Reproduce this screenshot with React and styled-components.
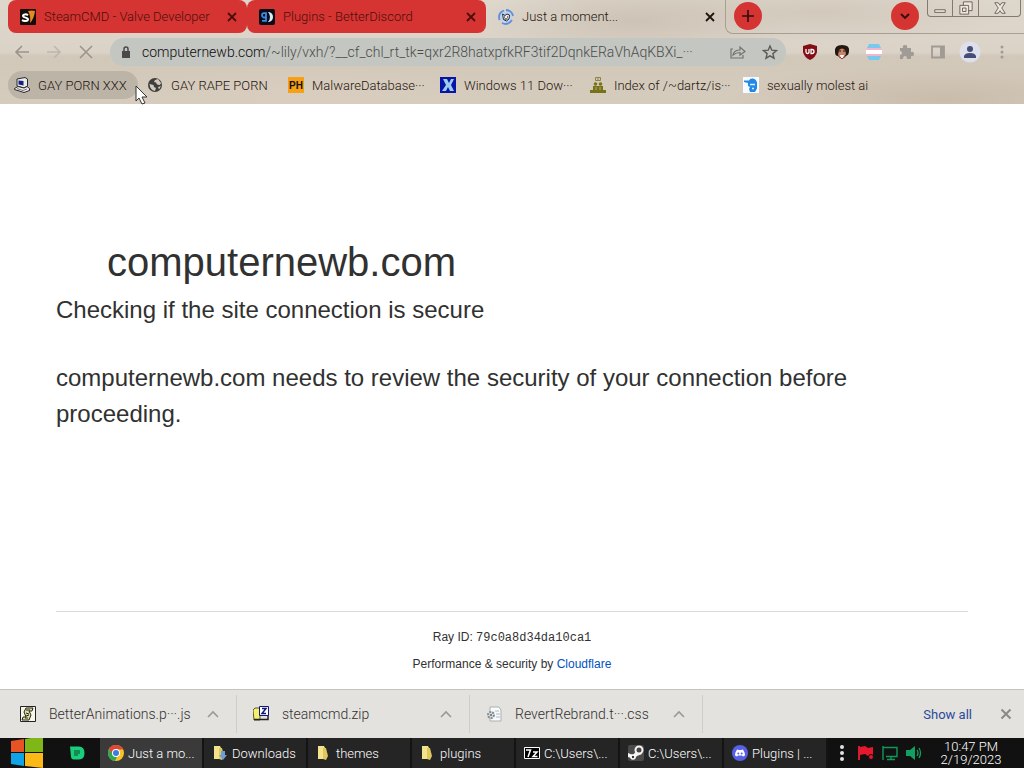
import React from 'react';
import styled, { createGlobalStyle } from 'styled-components';

const GlobalStyle = createGlobalStyle`
  * {
    box-sizing: border-box;
  }
  body {
    margin: 0;
    font-family: Roboto, "Liberation Sans", sans-serif;
    font-weight: 300;
    font-size: 13px;
    color: #1f150e;
  }
  button {
    font: inherit;
    color: inherit;
    padding: 0;
    border: 0;
    background: none;
  }
  a {
    color: inherit;
    text-decoration: none;
  }
  svg {
    display: block;
    flex: none;
  }
`;

const Screen = styled.div`
  display: flex;
  flex-direction: column;
  min-height: 100vh;
  overflow: hidden;
  background: #ffffff;
`;

const Chrome = styled.header`
  position: relative;
  background:
    radial-gradient(ellipse 160px 40px at 62% 20%, #cdc3b5 0%, transparent 100%),
    radial-gradient(ellipse 200px 30px at 80% 12%, #d2c9bc 0%, transparent 100%),
    radial-gradient(ellipse 220px 34px at 92% 95%, #c9bcab 0%, transparent 100%),
    radial-gradient(ellipse 200px 30px at 30% 90%, #d8cdbf 0%, transparent 100%),
    linear-gradient(to bottom, #ded7cc 0%, #dbd3c8 50%, #d2c8ba 54%, #d6ccbe 100%);
`;

const TabStrip = styled.nav`
  display: flex;
  height: 34px;
  padding-left: 8px;
`;

const TabBox = styled.div`
  display: flex;
  align-items: center;
  flex: 0 1 239px;
  min-width: 0;
  height: 33px;
  padding: 0 7px 0 12px;
  border-radius: 8px;
  color: ${props => (props.$active ? '#1f150e' : '#4a0f0b')};
  background: ${props => (props.$active ? 'transparent' : '#d63432')};
`;

const TabTitle = styled.a`
  flex: 1;
  min-width: 0;
  margin-left: 8px;
  white-space: nowrap;
  overflow: hidden;
`;

const IconButton = styled.button`
  display: flex;
  align-items: center;
  justify-content: center;
  flex: none;
  width: ${props => props.$size || 32}px;
  height: ${props => props.$size || 32}px;
`;

const StripRest = styled.div`
  display: flex;
  justify-content: space-between;
  flex: 1;
  padding: 2px 3px 0 8px;
  border: 1px solid #a89f93;
  border-width: 0 0 1px 1px;
  border-bottom-left-radius: 8px;
`;

const RoundButton = styled.button`
  display: flex;
  align-items: center;
  justify-content: center;
  width: 28px;
  height: 28px;
  border-radius: 50%;
  color: #2a1010;
  background: #d63432;
`;

const StripEnd = styled.div`
  display: flex;
  gap: 8px;
`;

const WindowButtons = styled.div`
  display: flex;
  height: 17px;
  margin-top: -2px;
  border: 1px solid #85796d;
  border-top: 0;
  border-radius: 0 0 4px 4px;
`;

const WindowButton = styled.button`
  display: flex;
  align-items: center;
  justify-content: center;
  width: ${props => props.$width}px;
  & + & {
    border-left: 1px solid #85796d;
  }
`;

const Toolbar = styled.div`
  display: flex;
  align-items: center;
  height: 36px;
  padding: 0 6px;
`;

const AddressBar = styled.form`
  display: flex;
  align-items: center;
  flex: 1;
  min-width: 0;
  height: 28px;
  margin: 0 8px;
  padding-left: 10px;
  border-radius: 14px;
  background: #c4c6c2;
`;

const Url = styled.a`
  flex: 1;
  min-width: 0;
  margin-left: 10px;
  font-size: 14px;
  line-height: 20px;
  white-space: nowrap;
  overflow: hidden;
  color: #4c4c49;
  span {
    color: #0c0c0c;
  }
`;

const Bookmarks = styled.nav`
  display: flex;
  height: 34px;
  padding: 1px 8px;
`;

const Bookmark = styled.a`
  display: flex;
  align-items: center;
  gap: 8px;
  width: ${props => props.$width}px;
  height: 28px;
  margin-right: 3px;
  padding-left: 6px;
  border-radius: 14px;
  white-space: nowrap;
  background: ${props => (props.$hover ? '#bdb4a8' : 'transparent')};
`;

const Page = styled.main`
  display: flex;
  flex-direction: column;
  flex: 1;
  padding: 128px 56px 16px;
  font-family: "Liberation Sans", Arial, sans-serif;
  font-weight: 400;
  color: #313131;
`;

const Title = styled.h1`
  margin: 0;
  padding-left: 51px;
  font-size: 40px;
  font-weight: 400;
  line-height: 60px;
`;

const Message = styled.h2`
  margin: 0 0 32px;
  font-size: 24px;
  font-weight: 400;
  line-height: 36px;
`;

const Footer = styled.footer`
  margin-top: auto;
  padding-top: 16px;
  border-top: 1px solid #d9d9d9;
  font-size: 12px;
  line-height: 18px;
  text-align: center;
  p {
    margin: 0 0 8px;
  }
  p:last-child {
    margin: 0;
  }
  code {
    font-family: "Liberation Mono", monospace;
  }
  a {
    color: #0051c3;
  }
`;

const Shelf = styled.section`
  display: flex;
  align-items: center;
  height: 49px;
  padding: 0 2px 0 4px;
  border-top: 1px solid #c4c3bf;
  background: #e3e2de;
`;

const Download = styled.div`
  display: flex;
  align-items: center;
  flex: 0 1 233px;
  height: 38px;
  padding: 0 7px 0 16px;
  border-right: 1px solid #cfcdc8;
  color: #33312e;
`;

const DownloadName = styled.button`
  flex: 1;
  margin-left: 13px;
  font-size: 14px;
  text-align: left;
  white-space: nowrap;
`;

const ShowAll = styled.button`
  margin-left: auto;
  margin-right: 18px;
  font-weight: 400;
  color: #2a4a9c;
`;

const Taskbar = styled.footer`
  display: flex;
  align-items: center;
  height: 30px;
  color: #ffffff;
  background: #111111;
`;

const StartButton = styled.button`
  width: 34px;
  height: 30px;
  margin: 0 20px 0 10px;
`;

const Task = styled.button`
  display: flex;
  align-items: center;
  gap: 4px;
  flex: 0 1 104px;
  min-width: 0;
  height: 30px;
  padding-left: 8px;
  border-right: 2px solid #141414;
  white-space: nowrap;
  overflow: hidden;
  background: ${props => (props.$active ? '#3a3a3a' : '#252525')};
`;

const ChatButton = styled(IconButton)`
  margin-right: 10px;
`;

const Tray = styled.div`
  display: flex;
  align-items: center;
  gap: 8px;
  flex: 1;
  padding-left: 6px;
`;

const Clock = styled.time`
  flex: 1;
  padding-right: 12px;
  line-height: 13px;
  text-align: center;
`;

const Cursor = styled.svg`
  position: absolute;
  left: 135px;
  top: 85px;
  z-index: 2;
`;

const Svg = ({ size = 16, box = 16, children, ...rest }) => (
  <svg width={size} height={size} viewBox={`0 0 ${box} ${box}`} fill="none" aria-hidden="true" {...rest}>
    {children}
  </svg>
);

const Close = ({ color = 'currentColor', size = 16 }) => (
  <Svg size={size}><path d="M4 4l8 8M12 4l-8 8" stroke={color} strokeWidth="1.8" /></Svg>
);

const SourceIcon = () => (
  <Svg>
    <rect width="16" height="16" rx="1" fill="#150b09" />
    <path d="M8 2q4-1 7 0-1 8-5 12 1-7-2-12z" fill="#e58a22" />
    <path d="M8 6.200C6.500 5 3 5 3 7s5 1.200 5 3.300S4 12.500 2 11.200" stroke="#fff" strokeWidth="2" />
  </Svg>
);

const BetterDiscordIcon = () => (
  <Svg>
    <rect width="16" height="16" rx="2" fill="#090b16" />
    <path d="M6.500 8.500H4.500Q3 8 3 6.200T5 4.200h2v7.600H3" stroke="#3a8ce8" strokeWidth="1.800" />
    <path d="M9 3h1q4 1 4 5t-4 5H9q2-2 2-5T9 3z" fill="#dce9f7" />
  </Svg>
);

const SwirlIcon = () => (
  <Svg>
    <circle cx="8" cy="8" r="6.500" fill="#c3d2ea" />
    <path d="M1.500 11Q-.500 4 6 1.500M8 1q6 .500 7 6M14 11q-4 6-10 3" stroke="#5d8fda" strokeWidth="1.800" />
    <path d="M4.500 5l2.500 1.500L9 5l2.500 1-.500 4-2.500 2-3-1.500z" fill="#eee" stroke="#252b3c" />
    <path d="M6 8h1M9 8h1M6.500 10h3" stroke="#111" />
  </Svg>
);

const ComputerIcon = () => (
  <Svg>
    <path d="M3 2l8-1.500 2.500 1.500v7L10 11 3 9z" fill="#eceae6" stroke="#292832" />
    <path d="M4.500 3.500l5 .500v4.500l-5-1z" fill="#152080" />
    <path d="M.500 11.500L4 9.500l6 1.500 3-1.500 2.500 2v2L10 15.500l-9.500-3z" fill="#f1eee7" stroke="#292832" />
    <path d="M3 11.500l6 2 4-1.500" stroke="#77727d" />
  </Svg>
);

const GlobeIcon = () => (
  <Svg>
    <circle cx="8" cy="8" r="7" fill="#403f3c" />
    <path d="M2.500 7l4 1 .500 2 2 1-1 3Q3 13 2.500 7zM8 3l3-1 3 4-1 2-3-.500-1-2-2-.500zM11 10l3-1-2 3.500z" fill="#d2cabd" />
  </Svg>
);

const BadgeIcon = () => (
  <Svg>
    <rect width="16" height="16" fill="#f8a015" />
    <text x="8" y="12" textAnchor="middle" fontSize="10" fontWeight="700" fontFamily="Liberation Sans, sans-serif" fill="#111">PH</text>
  </Svg>
);

const BlueXIcon = () => (
  <Svg>
    <rect width="16" height="16" fill="#0714a5" />
    <path d="M3 2h4l2 4 2-4h3l-3 6 3 6h-4l-2-4-2 4H2l4-6z" fill="#9ccbee" />
  </Svg>
);

const PeopleIcon = () => (
  <Svg>
    <path d="M5.500.500h5v3h-5z" stroke="#8c8440" />
    <path d="M7 2h2" stroke="#8c8440" />
    <circle cx="5.500" cy="7" r="1.800" fill="#77721a" />
    <circle cx="10.500" cy="7" r="1.800" fill="#77721a" />
    <path d="M3 9h10v4h3v3H0v-3h3z" fill="#77721a" />
    <path d="M6 10v3M10 10v3" stroke="#b5ac60" />
  </Svg>
);

const BlueHeadIcon = () => (
  <Svg>
    <rect width="16" height="16" fill="#f6fbff" />
    <path d="M1 3.500h5Q7 1 10 1.500t4 4v6L12 15H7l-1-3 1-2-2-1V6L1 5z" fill="#2389e5" />
    <path d="M7 7.500h5M9 11.500h2" stroke="#d9efff" strokeWidth="1.500" />
  </Svg>
);

const ShieldIcon = () => (
  <Svg>
    <path d="M8 0l7 2v6q-1 5-7 8-6-3-7-8V2z" fill="#840e17" />
    <path d="M4 5v3q0 1.500 1.500 1.500T7 8V5M9 5.500h1q2 0 2 2t-2 2H9z" stroke="#fff" strokeWidth="1.300" />
  </Svg>
);

const PortraitIcon = () => (
  <Svg>
    <path d="M1 8Q0 1 8 1t7 6q0 4-3 5l-2 2H6l-2-2Q1 12 1 8z" fill="#241713" />
    <path d="M5 6q3-3 6 0l1 4-3 5H7l-3-4z" fill="#c78468" />
    <path d="M5 7h2M9 7h2" stroke="#2a1710" />
    <path d="M6 11h4l-1 3H7z" fill="#fff" />
    <path d="M6 13l2 2 2-2" stroke="#b52d32" />
  </Svg>
);

const StripesIcon = () => (
  <Svg>
    <path d="M3 0h10l2 4H1zM1 12h14l-2 4H3z" fill="#79c8ee" />
    <path d="M1 4h14l1 3H0zM0 9h16l-1 3H1z" fill="#f3b5cb" />
    <path d="M0 6h16v4H0z" fill="#fff" />
  </Svg>
);

const FolderIcon = ({ blue }) => (
  <Svg>
    <path d="M2 1h6l1 2h1v10l-2 1H2z" fill="#f3e38c" />
    <path d="M7 3h3l2 8-2 4-3-1z" fill="#dfc65e" />
    {blue && <path d="M9 6h4v4h2l-4 5-4-5h2z" fill="#6d9ed0" />}
  </Svg>
);

const ChromeIcon = () => (
  <Svg>
    <circle cx="8" cy="8" r="8" fill="#f9c326" />
    <path d="M1 4Q3 0 8 0t7 4.500H8L4.500 10z" fill="#df4635" />
    <path d="M1 4l4 6 4 2-2 4Q0 15 0 8q0-2 1-4z" fill="#32a653" />
    <circle cx="8" cy="8" r="4" fill="#fff" />
    <circle cx="8" cy="8" r="3" fill="#3d7ce0" />
  </Svg>
);

const SevenZipIcon = () => (
  <Svg>
    <path d="M.500 2.500h15v11H.500z" fill="#000" stroke="#fff" />
    <path d="M2 5h4.500L4 12M9 7h4l-4 4.500h4.500" stroke="#fff" strokeWidth="1.500" />
  </Svg>
);

const SteamIcon = () => (
  <Svg>
    <rect width="16" height="16" rx="2" fill="#4a4a4a" />
    <path d="M0 8l5 2 4-5 5 4-5 2-3 3-6-2z" fill="#f4f4f4" />
    <circle cx="11" cy="5" r="3.500" fill="#444" stroke="#f4f4f4" strokeWidth="2" />
    <circle cx="5" cy="12" r="2" fill="#343434" stroke="#fff" strokeWidth="1.500" />
  </Svg>
);

const DiscordIcon = () => (
  <Svg>
    <circle cx="8" cy="8" r="8" fill="#5661e8" />
    <path d="M5 4.500l2 .500h2l2-.500q2 3 2 6l-2 1-1-1H6l-1 1-2-1q0-3 2-6z" fill="#fff" />
    <circle cx="6.300" cy="8.500" r="1" fill="#5661e8" />
    <circle cx="9.700" cy="8.500" r="1" fill="#5661e8" />
  </Svg>
);

const ScriptFileIcon = () => (
  <Svg>
    <path d="M.500.500h15v15H.500z" fill="#f8f7e9" stroke="#222" />
    <path d="M6 2h7l-1 3H9l2 4-2 5H2l1-3h3L4 6z" fill="#dfe19b" stroke="#222" />
    <path d="M6 4h4M6 7l3 1M6 10l3-1M5 12h3" stroke="#222" />
  </Svg>
);

const ZipFileIcon = () => (
  <Svg>
    <path d="M0 4l2-2h5v12H1z" fill="#f5ef70" stroke="#5d5a20" />
    <path d="M1 13.500h14V9" stroke="#222" strokeWidth="1.500" />
    <path d="M6.500.500h9v9h-9z" fill="#fff" stroke="#111778" />
    <path d="M9 2.500h4l-4 5h4" stroke="#111778" strokeWidth="1.500" />
  </Svg>
);

const CssFileIcon = () => (
  <Svg>
    <path d="M4 1h9l2 3v11H4z" fill="#fafafa" stroke="#a9b1b5" />
    <path d="M9 5h4M10 8h4M10 11h4" stroke="#aebbc2" />
    <circle cx="5" cy="9" r="3" fill="#ddd" stroke="#7f8d95" strokeWidth="2" strokeDasharray="2 1" />
    <circle cx="5" cy="9" r="1" fill="#5c6870" />
  </Svg>
);

const WindowsLogo = () => (
  <svg width="34" height="30" viewBox="0 0 34 30" aria-hidden="true">
    <path d="M1 3l13-2v13H1z" fill="#e65425" />
    <path d="M15 1l18-3v16H15z" fill="#7fb718" />
    <path d="M1 15h13v13L1 26z" fill="#11a3e8" />
    <path d="M15 15h18v15l-18-2z" fill="#fab916" />
  </svg>
);

const bookmarks = [
  { label: 'GAY PORN XXX', icon: <ComputerIcon />, width: 130 },
  { label: 'GAY RAPE PORN', icon: <GlobeIcon />, width: 138 },
  { label: 'MalwareDatabase···', icon: <BadgeIcon />, width: 149 },
  { label: 'Windows 11 Dow···', icon: <BlueXIcon />, width: 147 },
  { label: 'Index of /~dartz/is···', icon: <PeopleIcon />, width: 150 },
  { label: 'sexually molest ai', icon: <BlueHeadIcon />, width: 133 },
];

const downloads = [
  { name: 'BetterAnimations.p···.js', icon: <ScriptFileIcon /> },
  { name: 'steamcmd.zip', icon: <ZipFileIcon /> },
  { name: 'RevertRebrand.t···.css', icon: <CssFileIcon /> },
];

const tasks = [
  { label: 'Just a mo...', icon: <ChromeIcon /> },
  { label: 'Downloads', icon: <FolderIcon blue /> },
  { label: 'themes', icon: <FolderIcon /> },
  { label: 'plugins', icon: <FolderIcon /> },
  { label: 'C:\\Users\\...', icon: <SevenZipIcon /> },
  { label: 'C:\\Users\\...', icon: <SteamIcon /> },
  { label: 'Plugins | ...', icon: <DiscordIcon /> },
];

const Tab = ({ icon, title, active }) => (
  <TabBox $active={active}>
    {icon}
    <TabTitle href="#">{title}</TabTitle>
    <IconButton $size={16} aria-label="Close tab"><Close /></IconButton>
  </TabBox>
);

const Navigation = () => (
  <Toolbar>
    <IconButton aria-label="Back">
      <Svg><path d="M15 8H2M8 2L2 8l6 6" stroke="#9b948b" strokeWidth="1.600" /></Svg>
    </IconButton>
    <IconButton aria-label="Forward">
      <Svg><path d="M1 8h13M8 2l6 6-6 6" stroke="#bfb7ac" strokeWidth="1.600" /></Svg>
    </IconButton>
    <IconButton aria-label="Stop">
      <Svg><path d="M2 2l12 12M14 2L2 14" stroke="#9b948b" strokeWidth="1.600" /></Svg>
    </IconButton>
    <AddressBar>
      <Svg size={12} box={12}>
        <path d="M2 5h8v7H2z" fill="#494a48" />
        <path d="M4 5V3q0-2 2-2t2 2v2" stroke="#494a48" strokeWidth="1.500" />
      </Svg>
      <Url href="#"><span>computernewb.com</span>/~lily/vxh/?__cf_chl_rt_tk=qxr2R8hatxpfkRF3tif2DqnkERaVhAqKBXi_···</Url>
      <IconButton type="button" aria-label="Share">
        <Svg><path d="M3 5H1v9h12v-3M3 11q1-5 7-5V3l5 4.500L10 11V8.500Q6 8.500 3 11z" stroke="#73736f" strokeWidth="1.200" /></Svg>
      </IconButton>
      <IconButton type="button" aria-label="Bookmark this tab">
        <Svg><path d="M8 2l1.800 4.200 4.700.400-3.600 3 1.100 4.600L8 11.800l-4 2.400 1.100-4.600-3.600-3 4.700-.400z" stroke="#5b5b57" strokeWidth="1.400" /></Svg>
      </IconButton>
    </AddressBar>
    <IconButton aria-label="uBlock"><ShieldIcon /></IconButton>
    <IconButton aria-label="Portrait extension"><PortraitIcon /></IconButton>
    <IconButton aria-label="Stripes extension"><StripesIcon /></IconButton>
    <IconButton aria-label="Extensions">
      <Svg><path d="M2 4h3q-1-3 2-3t2 3h4v4q3-1 3 2t-3 2v3H9q0-3-2-3t-2 3H2v-4q2 0 2-2T2 7z" fill="#a09b94" /></Svg>
    </IconButton>
    <IconButton aria-label="Side panel">
      <Svg><path d="M2 2.500h12v11H2z" stroke="#a09b94" strokeWidth="1.800" /><path d="M10 2h4v12h-4z" fill="#a09b94" /></Svg>
    </IconButton>
    <IconButton aria-label="Profile">
      <Svg size={22} box={22}>
        <circle cx="11" cy="11" r="10.500" fill="#dde0ea" />
        <circle cx="11" cy="8" r="3" fill="#454c75" />
        <path d="M5 17v-2q1-3 6-3t6 3v2z" fill="#454c75" />
      </Svg>
    </IconButton>
    <IconButton aria-label="Menu">
      <Svg><path d="M8 3h0M8 8h0M8 13h0" stroke="#a09b94" strokeWidth="3" strokeLinecap="round" /></Svg>
    </IconButton>
  </Toolbar>
);

const App = () => (
  <Screen>
    <GlobalStyle />
    <Chrome>
      <TabStrip>
        <Tab icon={<SourceIcon />} title="SteamCMD - Valve Developer" />
        <Tab icon={<BetterDiscordIcon />} title="Plugins - BetterDiscord" />
        <Tab icon={<SwirlIcon />} title="Just a moment..." active />
        <StripRest>
          <RoundButton aria-label="New tab">
            <Svg><path d="M8 2v12M2 8h12" stroke="currentColor" strokeWidth="1.600" /></Svg>
          </RoundButton>
          <StripEnd>
            <RoundButton aria-label="Search tabs">
              <Svg><path d="M4 6l4 4 4-4" stroke="currentColor" strokeWidth="1.800" /></Svg>
            </RoundButton>
            <WindowButtons>
              <WindowButton $width={24} aria-label="Minimize">
                <Svg size={14}><path d="M2 10h12v3H2z" fill="#eee9e0" stroke="#62584e" /></Svg>
              </WindowButton>
              <WindowButton $width={26} aria-label="Restore">
                <Svg size={14}>
                  <path d="M5 1h10v10H5z" fill="#eee9e0" stroke="#62584e" />
                  <path d="M1 5h10v10H1zM4 8h4v4H4z" fill="#eee9e0" stroke="#62584e" />
                </Svg>
              </WindowButton>
              <WindowButton $width={42} aria-label="Close">
                <Svg size={14}><path d="M2 2h4l2 3 2-3h4l-4 6 4 6h-4l-2-3-2 3H2l4-6z" fill="#eee9e0" stroke="#62584e" /></Svg>
              </WindowButton>
            </WindowButtons>
          </StripEnd>
        </StripRest>
      </TabStrip>
      <Navigation />
      <Bookmarks>
        {bookmarks.map((item, index) => (
          <Bookmark href="#" key={item.label} $width={item.width} $hover={index === 0}>
            {item.icon}
            {item.label}
          </Bookmark>
        ))}
      </Bookmarks>
      <Cursor width="14" height="21" viewBox="0 0 14 21" aria-hidden="true">
        <path d="M1 1v15l3-3 3 6 3-1-3-6h5z" fill="#fff" stroke="#333" />
      </Cursor>
    </Chrome>

    <Page>
      <Title>computernewb.com</Title>
      <Message>Checking if the site connection is secure</Message>
      <Message as="p">computernewb.com needs to review the security of your connection before proceeding.</Message>
      <Footer>
        <p>Ray ID: <code>79c0a8d34da10ca1</code></p>
        <p>Performance &amp; security by <a href="#">Cloudflare</a></p>
      </Footer>
    </Page>

    <Shelf>
      {downloads.map(item => (
        <Download key={item.name}>
          {item.icon}
          <DownloadName>{item.name}</DownloadName>
          <IconButton aria-label="Download options">
            <Svg><path d="M3 11l5-5 5 5" stroke="#9b9995" strokeWidth="1.600" /></Svg>
          </IconButton>
        </Download>
      ))}
      <ShowAll>Show all</ShowAll>
      <IconButton aria-label="Close downloads"><Close color="#8c8a86" size={18} /></IconButton>
    </Shelf>

    <Taskbar>
      <StartButton aria-label="Start"><WindowsLogo /></StartButton>
      <ChatButton $size={26} aria-label="Chat">
        <Svg>
          <path d="M1 1.500h9q5.500 0 5.500 6.500T10 14.500H5q-3 0-3-3z" fill="#19ce7a" />
          <path d="M5 6h6M5 8h6M5 10h4" stroke="#0c4a2e" />
        </Svg>
      </ChatButton>
      {tasks.map((task, index) => (
        <Task key={index} $active={index === 0}>
          {task.icon}
          {task.label}
        </Task>
      ))}
      <Tray>
        <Svg><path d="M8 2h0M8 8h0M8 14h0" stroke="#e2e2e2" strokeWidth="4" strokeLinecap="round" /></Svg>
        <Svg>
          <path d="M1 1v14" stroke="#d51c31" strokeWidth="2" />
          <path d="M2 2l5-1 3 2 5-1v8l-5 1-3-2-5 1z" fill="#e6182d" />
          <circle cx="13" cy="12" r="2.500" fill="#e6182d" stroke="#111" />
        </Svg>
        <Svg><path d="M1 1v14M1 2.500h14v9H4M9 12v2M5 14.500h8" stroke="#159557" strokeWidth="1.400" /></Svg>
        <Svg>
          <path d="M0 5h4l5-4v14l-5-4H0z" fill="#12a062" />
          <path d="M11 5q2 3 0 6M13 3q3 5 0 10" stroke="#12a062" strokeWidth="1.300" />
        </Svg>
        <Clock>10:47 PM<br />2/19/2023</Clock>
      </Tray>
    </Taskbar>
  </Screen>
);

export default App;
